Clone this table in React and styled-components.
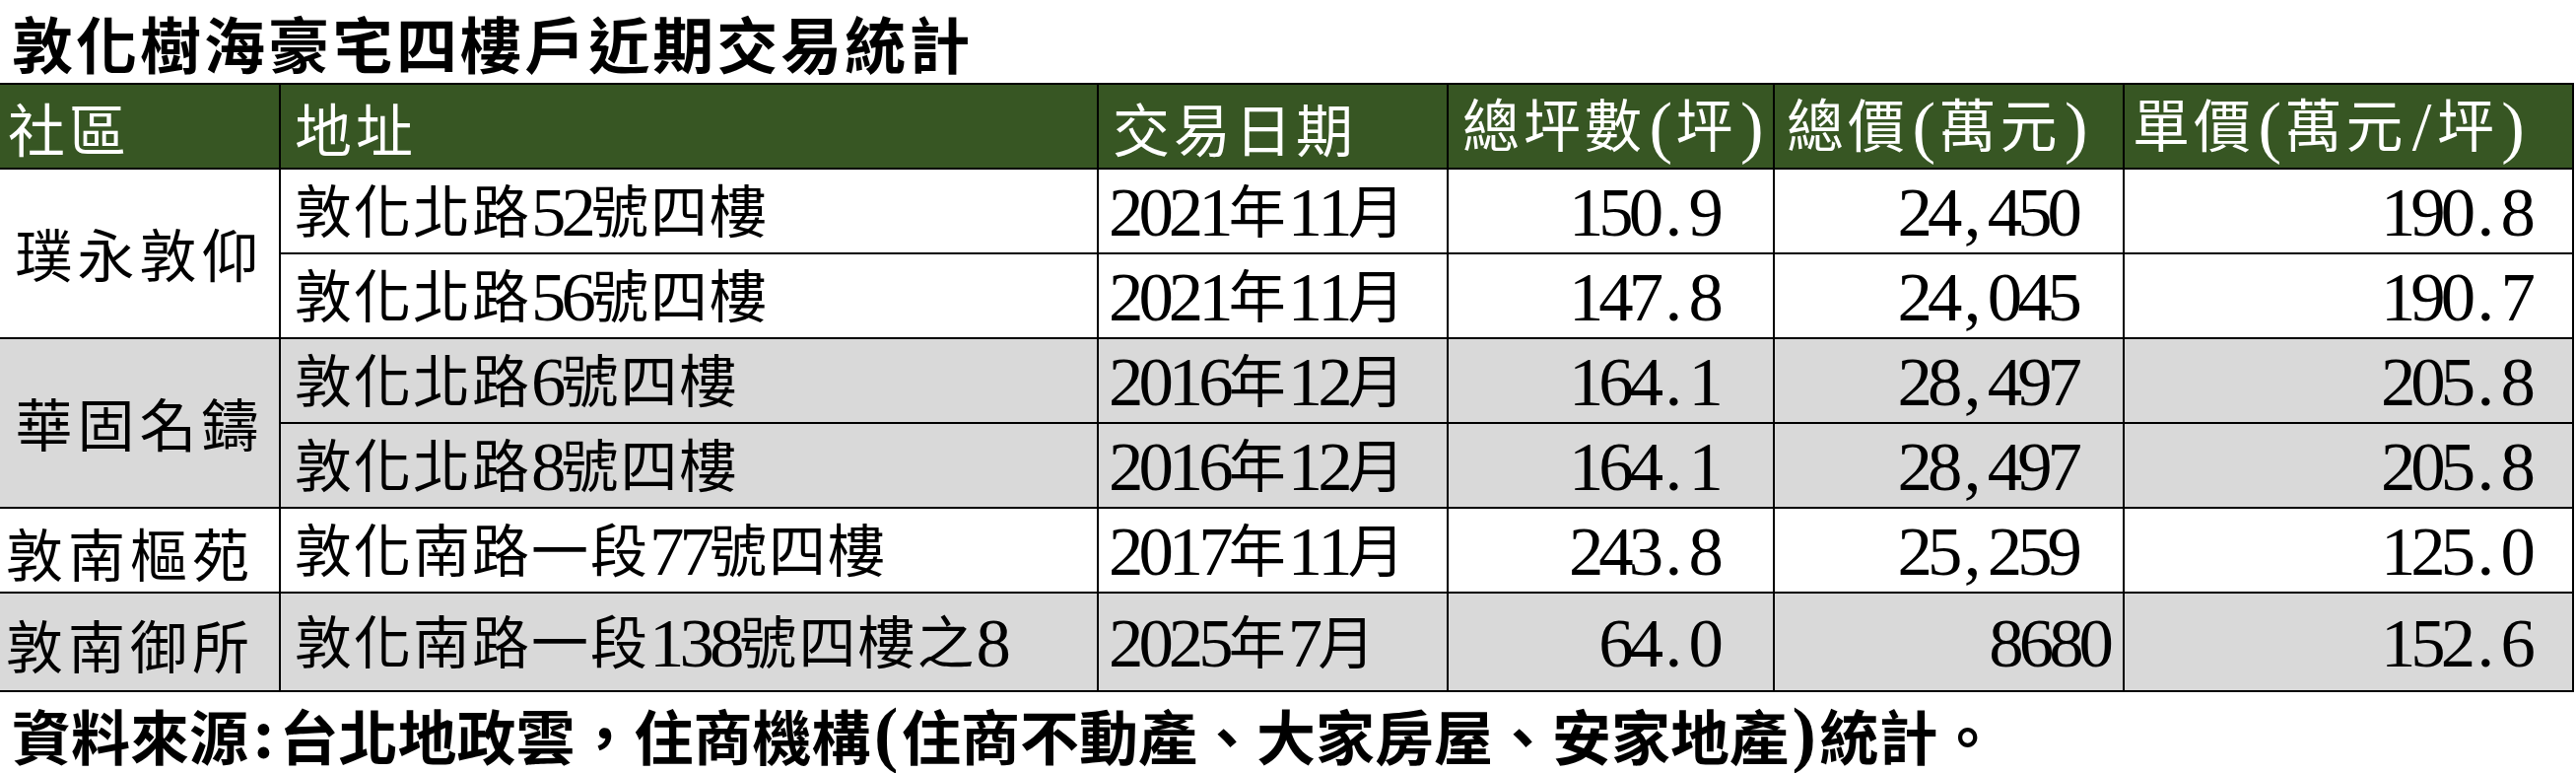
import React from 'react';
import styled, { createGlobalStyle } from 'styled-components';

const GlobalStyle = createGlobalStyle`
  html, body {
    margin: 0;
    padding: 0;
    background: #ffffff;
  }
  body {
    font-family: "Liberation Serif", "Noto Sans CJK TC", serif;
    color: #000000;
  }
`;

const rows = [
  { name: '璞永敦仰', span: 2, addr: '敦化北路52號四樓', date: '2021年11月', area: '150.9', total: '24,450', unit: '190.8' },
  { addr: '敦化北路56號四樓', date: '2021年11月', area: '147.8', total: '24,045', unit: '190.7' },
  { name: '華固名鑄', span: 2, shade: true, addr: '敦化北路6號四樓', date: '2016年12月', area: '164.1', total: '28,497', unit: '205.8' },
  { shade: true, addr: '敦化北路8號四樓', date: '2016年12月', area: '164.1', total: '28,497', unit: '205.8' },
  { name: '敦南樞苑', addr: '敦化南路一段77號四樓', date: '2017年11月', area: '243.8', total: '25,259', unit: '125.0' },
  { name: '敦南御所', shade: true, tall: true, addr: '敦化南路一段138號四樓之8', date: '2025年7月', area: '64.0', total: '8680', unit: '152.6', plain: true },
];

// ASCII glyphs in the sheet font are half-width and tall, CJK full-width
const ming = (text) =>
  Array.from(text).map((ch, i) =>
    /[\x20-\x7e]/.test(ch) ? <Half key={i}>{ch}</Half> : ch
  );

export default function App() {
  return (
    <>
      <GlobalStyle />
      <Page>
        <Title>{ming('敦化樹海豪宅四樓戶近期交易統計')}</Title>
        <Table>
          <Head $pad={8}><Text>{ming('社區')}</Text></Head>
          <Head $pad={14}><Text>{ming('地址')}</Text></Head>
          <Head $pad={14}><Text>{ming('交易日期')}</Text></Head>
          <Head $pad={14}><Text>{ming('總坪數(坪)')}</Text></Head>
          <Head $pad={12}><Text>{ming('總價(萬元)')}</Text></Head>
          <Head $pad={8}><Text>{ming('單價(萬元/坪)')}</Text></Head>

          {rows.map((r, i) => (
            <React.Fragment key={i}>
              {r.name && (
                <Cell $shade={r.shade} $span={r.span} $center={r.span > 1} $tall={r.tall} $padL={6}>
                  <Text $wide>{ming(r.name)}</Text>
                </Cell>
              )}
              <Cell $shade={r.shade} $tall={r.tall} $padL={14}><Text>{ming(r.addr)}</Text></Cell>
              <Cell $shade={r.shade} $tall={r.tall} $padL={10}><Text>{ming(r.date)}</Text></Cell>
              <Cell $shade={r.shade} $tall={r.tall} $right $padR={55}><Text>{ming(r.area)}</Text></Cell>
              <Cell $shade={r.shade} $tall={r.tall} $right $padR={r.plain ? 14 : 46}><Text>{ming(r.total)}</Text></Cell>
              <Cell $shade={r.shade} $tall={r.tall} $right $padR={42}><Text>{ming(r.unit)}</Text></Cell>
            </React.Fragment>
          ))}
        </Table>
        <Footer>{ming('資料來源:台北地政雲，住商機構(住商不動產、大家房屋、安家地產)統計。')}</Footer>
      </Page>
    </>
  );
}

const Page = styled.div`
  width: 2614px;
  height: 784px;
  overflow: hidden;
  background: #ffffff;
`;

const Half = styled.span`
  display: inline-block;
  width: 0.43em;
  font-size: 1.22em;
  letter-spacing: 0;
  text-align: center;
  line-height: 1;
  vertical-align: -3px;
`;

const Title = styled.div`
  height: 84px;
  box-sizing: border-box;
  padding: 0 0 4px 12px;
  display: flex;
  align-items: flex-end;
  font-size: 62px;
  font-weight: 700;
  letter-spacing: 3px;
  line-height: 1;
`;

const Table = styled.div`
  display: grid;
  grid-template-columns: 283px 828px 353px 329px 353px 454px;
  grid-template-rows: repeat(6, 84px) 98px;
  gap: 2px;
  padding: 2px 2px 2px 0;
  width: 2612px;
  box-sizing: border-box;
  background: #000000;
  font-size: 58px;
  line-height: 1;
`;

const Head = styled.div`
  background: #375623;
  color: #ffffff;
  display: flex;
  align-items: flex-end;
  padding: 0 0 6px ${(p) => p.$pad}px;
  letter-spacing: 4px;
`;

const Cell = styled.div`
  background: ${(p) => (p.$shade ? '#d9d9d9' : '#ffffff')};
  grid-row: ${(p) => (p.$span ? `span ${p.$span}` : 'auto')};
  display: flex;
  align-items: ${(p) => (p.$center ? 'center' : 'flex-end')};
  justify-content: ${(p) => (p.$center ? 'center' : p.$right ? 'flex-end' : 'flex-start')};
  padding: ${(p) => (p.$center ? '10px 0 0 0' : `0 ${p.$padR || 0}px ${p.$tall ? 12 : 5}px ${p.$padL || 0}px`)};
  letter-spacing: 2px;
`;

const Text = styled.span`
  white-space: nowrap;
  letter-spacing: ${(p) => (p.$wide ? '5px' : 'inherit')};
`;

const Footer = styled.div`
  height: 82px;
  box-sizing: border-box;
  padding: 0 0 3px 12px;
  display: flex;
  align-items: flex-end;
  font-size: 60px;
  font-weight: 700;
  letter-spacing: 0;
  line-height: 1;
`;
